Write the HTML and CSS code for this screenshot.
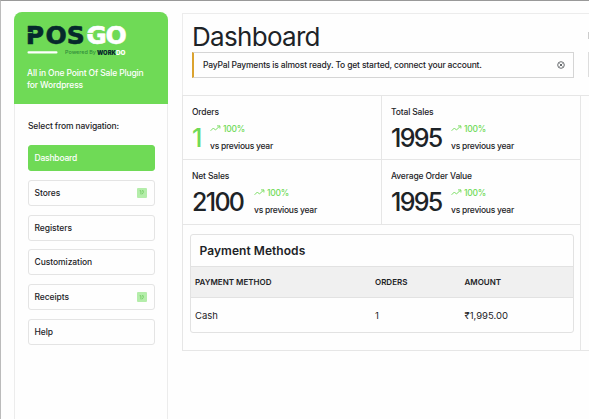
FILE: index.html
```html
<!DOCTYPE html>
<html lang="en">
<head>
    <meta charset="UTF-8">
    <meta name="viewport" content="width=device-width, initial-scale=1.0">
    <title>Dashboard</title>
    <link rel="stylesheet" href="styles.css">
</head>
<body>
    <div class="page">
        <aside class="sidebar">
            <div class="brand">
                <svg class="logo" width="102" height="36" viewBox="0 0 102 36">
                    <g class="logo-name">
                        <text class="dark" x="-1.2 18.6 39.8" y="19.8">POS</text>
                        <text class="light" x="59.2 78.4" y="19.8">GO</text>
                    </g>
                    <path class="cut" d="M0 8.6h5.4M60 9.4h6"/>
                    <rect x="0.5" y="27.2" width="30" height="2.3" rx="1.1" fill="#fff"/>
                    <text class="powered" x="38" y="30.3" textLength="31" lengthAdjust="spacingAndGlyphs">Powered By</text>
                    <text class="work" x="70" y="30.5" textLength="19" lengthAdjust="spacingAndGlyphs">WORK</text>
                    <text class="work light" x="89" y="30.5" textLength="9.5" lengthAdjust="spacingAndGlyphs">DO</text>
                </svg>
                <p>All in One Point Of Sale Plugin<br>for Wordpress</p>
            </div>
            <p class="nav-title">Select from navigation:</p>
            <nav class="nav">
                <a class="active">Dashboard</a>
                <a>Stores <span class="more"><svg width="5" height="5" viewBox="0 0 5 5"><path d="M.7.7h1.2v3.6M3 .7h1.2v2L3 4.3"/></svg></span></a>
                <a>Registers</a>
                <a>Customization</a>
                <a>Receipts <span class="more"><svg width="5" height="5" viewBox="0 0 5 5"><path d="M.7.7h1.2v3.6M3 .7h1.2v2L3 4.3"/></svg></span></a>
                <a>Help</a>
            </nav>
        </aside>

        <main class="content">
            <header class="top">
                <div class="top-main">
                    <h1>Dashboard</h1>
                    <div class="notice">
                        <span>PayPal Payments is almost ready. To get started, connect your account.</span>
                        <svg width="8" height="8" viewBox="0 0 8 8"><circle cx="4" cy="4" r="3.3"/><path d="M2.5 2.5l3 3M5.5 2.5l-3 3"/></svg>
                    </div>
                </div>
                <div class="top-side">
                    <span class="side-text"></span>
                    <span class="side-box"></span>
                </div>
            </header>

            <div class="panel">
                <div class="report">
                    <section class="stats">
                        <div class="stat">
                            <h3>Orders</h3>
                            <div class="figures">
                                <strong class="green one">1</strong>
                                <div class="trend">
                                    <span class="up"><svg width="11" height="7" viewBox="0 0 11 7"><path d="M.6 5.8L3.4 3l2 2L9.6 1.2M7 .9h2.9v2.6"/></svg>100%</span>
                                    <span class="vs">vs previous year</span>
                                </div>
                            </div>
                        </div>
                        <div class="stat">
                            <h3>Total Sales</h3>
                            <div class="figures">
                                <strong>1995</strong>
                                <div class="trend">
                                    <span class="up"><svg width="11" height="7" viewBox="0 0 11 7"><path d="M.6 5.8L3.4 3l2 2L9.6 1.2M7 .9h2.9v2.6"/></svg>100%</span>
                                    <span class="vs">vs previous year</span>
                                </div>
                            </div>
                        </div>
                        <div class="stat">
                            <h3>Net Sales</h3>
                            <div class="figures">
                                <strong class="net">2100</strong>
                                <div class="trend">
                                    <span class="up"><svg width="11" height="7" viewBox="0 0 11 7"><path d="M.6 5.8L3.4 3l2 2L9.6 1.2M7 .9h2.9v2.6"/></svg>100%</span>
                                    <span class="vs">vs previous year</span>
                                </div>
                            </div>
                        </div>
                        <div class="stat">
                            <h3>Average Order Value</h3>
                            <div class="figures">
                                <strong>1995</strong>
                                <div class="trend">
                                    <span class="up"><svg width="11" height="7" viewBox="0 0 11 7"><path d="M.6 5.8L3.4 3l2 2L9.6 1.2M7 .9h2.9v2.6"/></svg>100%</span>
                                    <span class="vs">vs previous year</span>
                                </div>
                            </div>
                        </div>
                    </section>

                    <section class="payments">
                        <h2>Payment Methods</h2>
                        <div class="row head">
                            <span>PAYMENT METHOD</span>
                            <span>ORDERS</span>
                            <span>AMOUNT</span>
                        </div>
                        <div class="row">
                            <span>Cash</span>
                            <span>1</span>
                            <span>₹1,995.00</span>
                        </div>
                    </section>
                </div>
            </div>
        </main>
    </div>
</body>
</html>
```

FILE: styles.css
```css
* {
    box-sizing: border-box;
    margin: 0;
    padding: 0;
}
body {
    font-family: Inter, "Liberation Sans", sans-serif;
    font-size: 8.5px;
    color: #1d2327;
    background: #fefefe;
    overflow: hidden;
}
.page {
    display: flex;
    gap: 14px;
    height: 419px;
    padding: 11px 0 0 13px;
    border-top: 1px solid #999;
    border-left: 1px solid #bbb;
}
.sidebar {
    width: 154px;
    flex-shrink: 0;
    border: 1px solid #ececec;
    border-top: none;
    border-bottom: none;
    border-radius: 8px 8px 0 0;
}
.brand {
    height: 92px;
    margin: 0 -1px;
    padding: 12px 0 0 13px;
    background: #6fda56;
    border-radius: 8px 8px 0 0;
    color: #fff;
}
.logo {
    display: block;
    overflow: visible;
}
.logo-name text {
    font-family: "DejaVu Sans", sans-serif;
    font-size: 25px;
    font-weight: bold;
    stroke-width: 0.6;
    stroke-linejoin: round;
}
.dark {
    fill: #06292c;
    stroke: #06292c;
}
.light {
    fill: #fff;
}
.logo-name .light {
    stroke: #fff;
}
.cut {
    stroke: #6fda56;
    stroke-width: 1;
}
.powered {
    font-size: 5px;
    font-weight: 500;
    fill: #2f8a3a;
}
.work {
    font-size: 6px;
    font-weight: 900;
    fill: #06292c;
}
.work.light {
    fill: #fff;
}
.brand p {
    margin-top: 7px;
    font-size: 8.5px;
    font-weight: 500;
    line-height: 12px;
    letter-spacing: -0.14px;
}
.nav-title {
    margin: 16px 0 0 13px;
    font-size: 8.5px;
    font-weight: 500;
    line-height: 12px;
    letter-spacing: -0.12px;
}
.nav {
    display: flex;
    flex-direction: column;
    gap: 8.8px;
    padding: 13px 12.5px 0;
}
.nav a {
    display: flex;
    align-items: center;
    justify-content: space-between;
    height: 26px;
    padding: 0 7px 0 6px;
    border: 1px solid #e4e4e4;
    border-radius: 3px;
    font-weight: 500;
    letter-spacing: -0.06px;
}
.nav .active {
    background: #6fda56;
    border-color: #6fda56;
    color: #fff;
    letter-spacing: -0.2px;
}
.more {
    display: flex;
    align-items: center;
    justify-content: center;
    width: 10px;
    height: 10px;
    background: #b4edaa;
    border-radius: 1px;
}
.more path {
    fill: none;
    stroke: #6cc95c;
    stroke-width: 0.8;
}
.content {
    flex: 1;
    margin-top: 1px;
}
.top {
    display: flex;
    justify-content: space-between;
    height: 82px;
    padding-left: 9px;
    border: 1px solid #ececec;
    border-right: none;
    border-bottom: none;
}
.top-main {
    width: 382px;
}
h1 {
    margin-top: 8px;
    font-size: 26px;
    font-weight: 400;
    line-height: 30px;
    letter-spacing: -0.7px;
}
.notice {
    display: flex;
    align-items: center;
    justify-content: space-between;
    height: 26px;
    padding: 0 8px 0 9px;
    border: 1px solid #d5d5d5;
    border-left: 2px solid #dba32f;
    font-weight: 500;
    letter-spacing: -0.17px;
}
.notice svg {
    fill: none;
    stroke: #686b6e;
    stroke-width: 1;
}
.top-side {
    width: 1px;
    display: flex;
    flex-direction: column;
}
.side-text {
    height: 7px;
    margin-top: 18px;
    background: #ccc;
}
.side-box {
    height: 25px;
    margin-top: 13px;
    background: #ddd;
}
.panel {
    height: 256px;
    border: 1px solid #e6e6e6;
    border-right: none;
}
.report {
    width: 398px;
    height: 254px;
    border-right: 1px solid #e6e6e6;
}
.stats {
    display: grid;
    grid-template-columns: 199px 198px;
    grid-template-rows: 64px 65px;
}
.stat {
    padding: 10px 0 0 9px;
    border-bottom: 1px solid #e6e6e6;
}
.stat:nth-child(odd) {
    border-right: 1px solid #e6e6e6;
}
.stat h3 {
    font-size: 8.5px;
    font-weight: 500;
    line-height: 12px;
    letter-spacing: -0.16px;
}
.figures {
    display: flex;
    margin-top: 3px;
}
.figures strong {
    width: 60px;
    font-size: 25px;
    font-weight: 500;
    line-height: 34px;
    letter-spacing: -1.7px;
}
.figures .green {
    color: #6fda56;
}
.figures .one {
    width: 18px;
}
.figures .net {
    width: 62px;
}
.trend {
    display: flex;
    flex-direction: column;
    gap: 5px;
    padding-top: 1.5px;
    line-height: 12px;
    font-weight: 500;
    letter-spacing: -0.25px;
}
.up {
    display: flex;
    align-items: center;
    gap: 2px;
    color: #6fda56;
}
.up svg {
    fill: none;
    stroke: #6fda56;
    stroke-width: 0.9;
}
.payments {
    width: 384px;
    margin: 9px 0 0 7px;
    border: 1px solid #e2e2e2;
    border-radius: 3px;
}
.payments h2 {
    height: 31px;
    padding-left: 8.5px;
    font-size: 12px;
    font-weight: 600;
    line-height: 31px;
    letter-spacing: 0.05px;
}
.row {
    display: grid;
    grid-template-columns: 180px 89.5px 1fr;
    align-items: center;
    height: 34px;
    padding-left: 4px;
    font-size: 9.5px;
}
.head {
    height: 32px;
    background: #f0f0f0;
    border-top: 1px solid #e2e2e2;
    border-bottom: 1px solid #e2e2e2;
    font-size: 8px;
    font-weight: 600;
}
```
